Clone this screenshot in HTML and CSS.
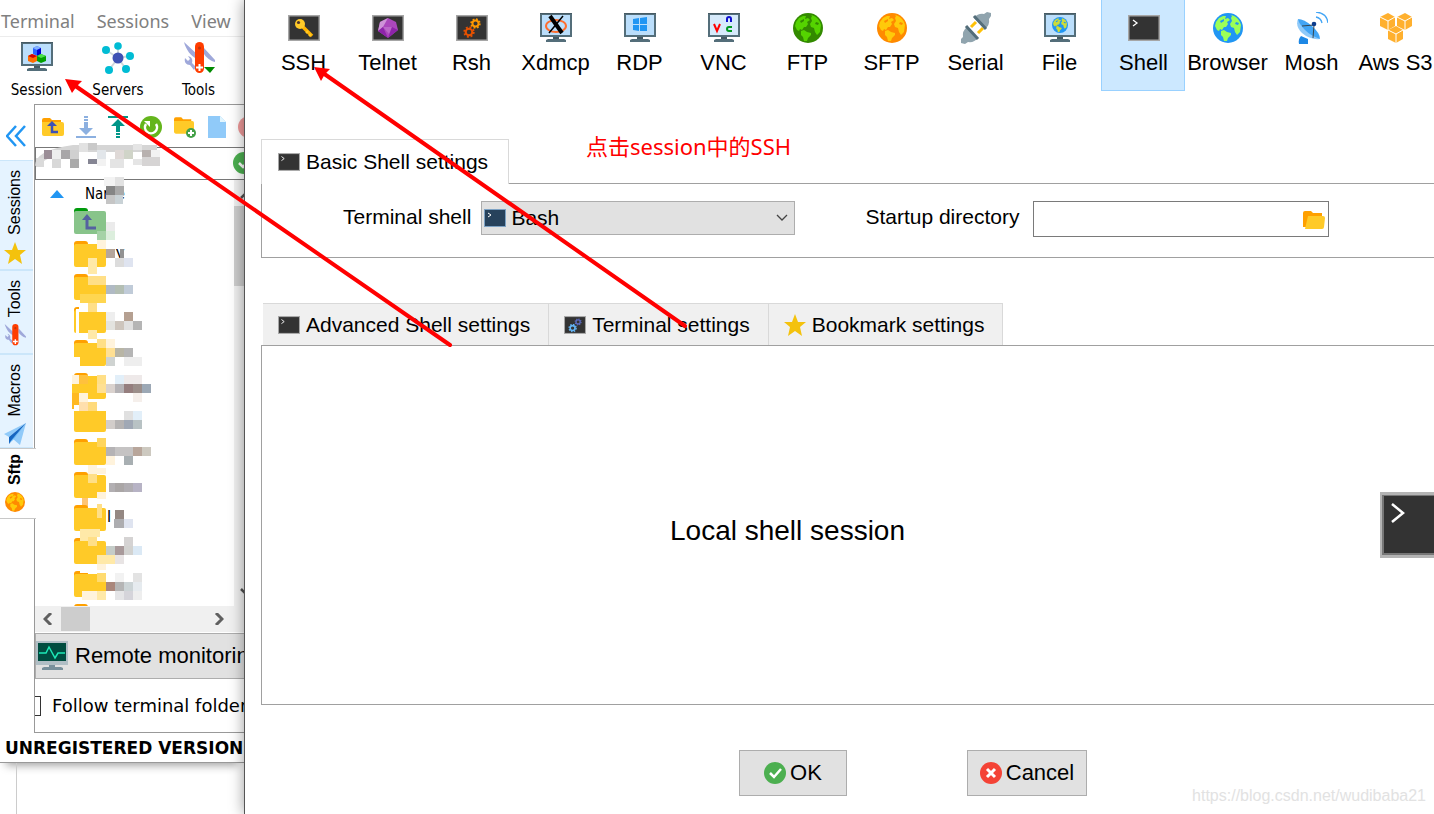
FILE: index.html
```html
<!DOCTYPE html>
<html lang="en">
<head>
  <meta charset="UTF-8">
  <title>Session settings</title>
  <link rel="stylesheet" href="styles.css">
</head>
<body>

  <!-- SHARED ICONS -->
  <svg class="sprite" aria-hidden="true">
    <symbol id="monitor" viewBox="0 0 32 30">
      <path fill="#546e7a" d="M0 0h32v24H0z"/>
      <path fill="#455a64" d="M0 0h32v1H0zM13 24h6v2h-6z"/>
      <path fill="#bbdefb" d="M2 2h28v20H2z"/>
      <path fill="#546e7a" d="M8 26h16l2 1v2H6v-2z"/>
    </symbol>
    <symbol id="box" viewBox="0 0 32 26">
      <path fill="#a6a6a6" d="M0 0h32v26H0z"/>
      <path fill="#333" d="M1.500 1.500h29v23h-29z"/>
    </symbol>
    <symbol id="terminal" viewBox="0 0 32 26">
      <use href="#box"/>
      <path fill="none" stroke="#fff" stroke-width="1.300" d="M5 5l4 3-4 3"/>
    </symbol>
    <symbol id="globe" viewBox="0 0 30 30">
      <circle class="ocean" cx="15" cy="15" r="15"/>
      <path class="land" d="M3 9L6 5l4-2 3 0-1 3 3-1 2 2-3 2 1 2-2 3-2 0-2 3-2-1-1 2-2-1-2-4zM8 18l3-1 3 2 4 1 0 2-3 3-1 3-3 0-1-4-2-2zM18 2c5 1 9 5 10 10l-1 7-3 3-2-3-1-4-3-1-1-3 2-3-1-3 1-2z"/>
      <path class="ocean" d="M7 8l4-2 0 2-3 2zM23 9l3 1-1 2-3-1z"/>
    </symbol>
    <symbol id="star" viewBox="0 0 22 22">
      <path fill="#f4c20d" d="M11 0l3 8h8l-6 5 2 9-7-5-7 5 2-9-6-5h8z"/>
    </symbol>
    <symbol id="knife" viewBox="0 0 32 32">
      <path fill="#9fa8da" d="M1 0l15 14-2 3C8 14 3 8 1 0zM21 6l11 12v2c-5-1-9-5-11-8zM2 16l3 3 2-2-2-3c4 1 5 4 4 7l4 4-2 3-4-5c-4 0-6-3-5-7z"/>
      <rect x="12" width="9" height="31" rx="4.500" fill="#ff3d00"/>
      <circle cx="16.500" cy="6" r="1.500" fill="#bf360c"/>
      <path stroke="#fff" stroke-width="2" d="M16.500 22v7M13 25.500h7"/>
    </symbol>
    <symbol id="gear" viewBox="-10 -10 20 20">
      <g fill="none" stroke="currentColor">
        <circle r="5.500" stroke-width="3.500"/>
        <circle r="8" stroke-width="3" stroke-dasharray="3.200 3.080"/>
      </g>
    </symbol>
    <symbol id="check" viewBox="0 0 22 22">
      <circle cx="11" cy="11" r="11" fill="#4caf50"/>
      <path fill="none" stroke="#fff" stroke-width="2.500" d="M6 11l4 4 7-8"/>
    </symbol>
    <symbol id="folder" viewBox="0 0 22 18">
      <path fill="#ffa000" d="M0 2q0-2 2-2h6l2 2h9v14H0z"/>
      <path fill="#ffca28" d="M0 4h20q2 0 2 2v10q0 2-2 2H2q-2 0-2-2z"/>
    </symbol>
  </svg>

  <div class="app">
    <nav class="menu">
      <a href="#">Terminal</a>
      <a href="#">Sessions</a>
      <a href="#">View</a>
    </nav>

    <div class="toolbar">
      <button class="tool">
        <svg width="32" height="32" viewBox="0 0 32 32">
          <use href="#monitor" width="32" height="30"/>
          <path fill="#2962ff" d="M12 6l4-2 4 2v6l-4 2-4-2z"/><path fill="#82b1ff" d="M12 6l4-2 4 2-4 2z"/><path fill="#0000d0" d="M16 8l4-2v6l-4 2z"/>
          <path fill="#ff6d00" d="M7 14l4-2 5 2v5l-4 2-5-2z"/><path fill="#d50000" d="M7 14l4-2 5 2-4 2z"/>
          <path fill="#00a000" d="M16 14l4-2 5 2v5l-5 2-4-2z"/><path fill="#4be04b" d="M16 14l4-2 5 2-5 2z"/>
        </svg>
        <span>Session</span>
      </button>
      <button class="tool">
        <svg width="32" height="32" viewBox="0 0 32 32">
          <path stroke="#cfd8dc" stroke-width="2" d="M16 16V4M16 16L4 8M16 16l11-2M16 16l8 11M16 16L7 28"/>
          <circle cx="16" cy="16" r="5.500" fill="#3f51b5"/>
          <g fill="#00bcd4"><circle cx="16" cy="4" r="3.800"/><circle cx="4" cy="8" r="4"/><circle cx="28" cy="14" r="4"/><circle cx="24" cy="27" r="4"/><circle cx="7" cy="28" r="4"/></g>
        </svg>
        <span>Servers</span>
      </button>
      <button class="tool">
        <svg width="32" height="32" viewBox="0 0 32 32">
          <use href="#knife" width="32" height="32"/>
          <path fill="#008a00" d="M21 25h11l-5 6z"/>
        </svg>
        <span>Tools</span>
      </button>
    </div>

    <div class="workspace">
      <div class="rail">
        <button class="collapse" aria-label="Collapse">
          <svg width="20" height="22" viewBox="0 0 20 22"><path fill="none" stroke="#2196f3" stroke-width="2.500" d="M10 1L1 11l9 10M19 1l-9 10 9 10"/></svg>
        </button>
        <button class="rail-tab sessions"><span>Sessions</span><svg width="22" height="22"><use href="#star"/></svg></button>
        <button class="rail-tab tools"><span>Tools</span><svg width="22" height="22"><use href="#knife"/></svg></button>
        <button class="rail-tab macros"><span>Macros</span>
          <svg width="22" height="22" viewBox="0 0 22 22"><path fill="#90caf9" d="M22 0L0 11l5 3zM22 0L9 16l7 6z"/><path fill="#1565c0" d="M22 0L5 14v7l4-5z"/><path fill="#64b5f6" d="M22 0L5 20l4-3z"/></svg>
        </button>
        <button class="rail-tab active"><span>Sftp</span><svg class="globe-orange" width="20" height="20"><use href="#globe"/></svg></button>
      </div>

      <div class="browser">
        <div class="actions">
          <button aria-label="Parent folder">
            <svg width="22" height="18" viewBox="0 0 22 18"><use href="#folder"/><path fill="none" stroke="#3f51b5" stroke-width="2.500" d="M10 5v9h6"/><path fill="#3f51b5" d="M5 8l5-5 5 5z"/></svg>
          </button>
          <button aria-label="Download">
            <svg width="20" height="22" viewBox="0 0 20 22"><path fill="#8cb0e0" d="M8 0h4v2H8zM8 3h4v2H8zM8 6h4v6h5l-7 7-7-7h5zM0 20h20v2H0z"/></svg>
          </button>
          <button aria-label="Upload">
            <svg width="20" height="22" viewBox="0 0 20 22"><path fill="#009688" d="M0 0h20v2H0zM10 3l7 7h-5v6H8v-6H3zM8 17h4v2H8zM8 20h4v2H8z"/></svg>
          </button>
          <button aria-label="Refresh">
            <svg width="22" height="22" viewBox="0 0 22 22"><circle cx="11" cy="11" r="11" fill="#64b51c"/><path fill="none" stroke="#fff" stroke-width="2.500" d="M6 8a6 6 0 1 0 10 0"/><path fill="#fff" d="M4 5h6v6z"/></svg>
          </button>
          <button aria-label="New folder">
            <svg width="22" height="22" viewBox="0 0 22 22"><use href="#folder" y="1" width="20" height="17"/><circle cx="17" cy="17" r="5" fill="#43a047"/><path stroke="#fff" stroke-width="2" d="M17 14v6M14 17h6"/></svg>
          </button>
          <button aria-label="New file">
            <svg width="18" height="22" viewBox="0 0 18 22"><path fill="#90caf9" d="M0 0h12l6 6v16H0z"/><path fill="#e1f5fe" d="M12 0v6h6z"/></svg>
          </button>
          <button aria-label="Delete">
            <svg width="22" height="22" viewBox="0 0 22 22"><circle cx="11" cy="11" r="11" fill="#ef9a9a"/></svg>
          </button>
        </div>

        <div class="path">
          <input type="text" aria-label="Remote path">
          <svg class="path-mosaic" id="pathMosaic" width="126" height="26" viewBox="35 143 126 26"></svg>
          <svg class="path-check" width="22" height="22"><use href="#check"/></svg>
        </div>

        <div class="files">
          <div class="files-main">
            <div class="files-head">
              <svg width="14" height="8" viewBox="0 0 14 8"><path fill="#2196f3" d="M7 0l7 8H0z"/></svg>
              <span>Name</span>
              <svg class="head-mosaic" id="headMosaic" width="24" height="28" viewBox="103 177 24 28"></svg>
            </div>
            <ul class="file-list" id="fileList"></ul>
          </div>
          <div class="vscroll">
            <svg width="11" height="26" viewBox="0 0 11 26"><path fill="none" stroke="#505050" stroke-width="2.500" d="M7 18l6-6 6 6"/></svg>
            <div class="thumb"></div>
            <svg class="down" width="11" height="20" viewBox="0 0 11 20"><path fill="none" stroke="#505050" stroke-width="2.500" d="M7 3l6 6 6-6"/></svg>
          </div>
        </div>

        <div class="hscroll">
          <svg width="10" height="12" viewBox="0 0 10 12"><path fill="none" stroke="#606060" stroke-width="3" d="M8 0L2 6l6 6"/></svg>
          <div class="thumb"></div>
          <svg class="right" width="10" height="12" viewBox="0 0 10 12"><path fill="none" stroke="#606060" stroke-width="3" d="M2 0l6 6-6 6"/></svg>
        </div>

        <button class="monitoring">
          <svg width="32" height="30" viewBox="0 0 32 30">
            <path fill="#b0bec5" d="M0 0h32v24H0z"/><path fill="#004d40" d="M2 2h28v18H2z"/>
            <path fill="none" stroke="#1de9b6" stroke-width="1.500" d="M3 12h7l3-6 6 11 3-5h7"/>
            <path fill="#78909c" d="M13 24h6v2h6l2 1v2H6v-2l2-1h5z"/>
          </svg>
          <span>Remote monitoring</span>
        </button>

        <label class="follow"><input type="checkbox"><span>Follow terminal folder</span></label>
      </div>
    </div>

    <div class="status">UNREGISTERED VERSION</div>
    <div class="below"></div>
  </div>

  <div class="dialog">
    <div class="types">
      <button class="type"><svg width="32" height="30" viewBox="0 -2 32 30"><use href="#box" width="32" height="26"/><path stroke="#ffb300" stroke-width="3.500" d="M14 11l10 10"/><path stroke="#ffca28" stroke-width="2" d="M18 18l2-2M21 21l2-2"/><circle cx="12" cy="9" r="5" fill="#ffca28"/><circle cx="10.500" cy="7.500" r="1.600" fill="#4e342e"/></svg><span>SSH</span></button>
      <button class="type"><svg width="32" height="30" viewBox="0 -2 32 30"><use href="#box" width="32" height="26"/><path fill="#ab47bc" d="M16 3l8 4 2 8-10 8-10-7 2-9z"/><path fill="#ce93d8" d="M16 3L8 7l3 5zM8 7l3 5-5 4z"/><path fill="#ba68c8" d="M11 12h9l-3 7z"/><path fill="#8e24aa" d="M16 23l4-11 6 3zM11 12l5 11-10-7z"/></svg><span>Telnet</span></button>
      <button class="type"><svg width="32" height="30" viewBox="0 -2 32 30"><use href="#box" width="32" height="26"/><use class="gear-dark" href="#gear" x="7" y="11" width="12" height="12"/><use class="gear-light" href="#gear" x="14" y="3" width="11" height="11"/></svg><span>Rsh</span></button>
      <button class="type"><svg width="32" height="30" viewBox="0 0 32 30"><use href="#monitor"/><ellipse cx="16" cy="13" rx="10" ry="6" fill="none" stroke="#ff6d2d" stroke-width="2"/><path stroke="#000" stroke-width="4" d="M10 3l12 17"/><path stroke="#000" stroke-width="1.500" d="M23 3L9 20"/></svg><span>Xdmcp</span></button>
      <button class="type"><svg width="32" height="30" viewBox="0 0 32 30"><use href="#monitor"/><path fill="#2196f3" d="M9 6l6-1v6H9zM16 5l7-1v7h-7zM9 12h6v6l-6-1zM16 12h7v6h-7z"/></svg><span>RDP</span></button>
      <button class="type"><svg width="32" height="30" viewBox="0 0 32 30"><use href="#monitor"/><path fill="#d6eafb" d="M2 2h28v20H2z"/><path fill="none" stroke="#f00" stroke-width="2" d="M6 11l3 7 3-7"/><path fill="none" stroke="#1010d0" stroke-width="2" d="M19 9V6q0-2 2-2t2 2v3"/><path fill="none" stroke="#009820" stroke-width="2" d="M24 14h-3q-2 0-2 2t2 2h3"/></svg><span>VNC</span></button>
      <button class="type"><svg class="globe-green" width="30" height="30"><use href="#globe"/></svg><span>FTP</span></button>
      <button class="type"><svg class="globe-orange" width="30" height="30"><use href="#globe"/></svg><span>SFTP</span></button>
      <button class="type"><svg width="32" height="32" viewBox="0 0 32 32"><path fill="#90a4ae" d="M1 31v-4l2-2q-1-6 4-10l11 11q-4 5-10 4l-3 2zM31 1v3l-2 3q1 6-4 10L14 6q4-5 10-4l3-2z"/><path stroke="#ffc107" stroke-width="3" d="M11 15l5-5M18 21l5-5"/><path stroke="#546e7a" stroke-width="3" d="M6 14l12 13M14 4l12 13"/></svg><span>Serial</span></button>
      <button class="type"><svg class="globe-file" width="32" height="30" viewBox="0 0 32 30"><use href="#monitor"/><use href="#globe" x="8" y="4" width="16" height="16"/></svg><span>File</span></button>
      <button class="type selected"><svg width="32" height="30" viewBox="0 -2 32 30"><use href="#terminal" width="32" height="26"/></svg><span>Shell</span></button>
      <button class="type"><svg class="globe-blue" width="30" height="30"><use href="#globe"/></svg><span>Browser</span></button>
      <button class="type"><svg width="32" height="32" viewBox="0 0 32 32"><path fill="#1e88e5" d="M5 24l7 3v5H3q-1-5 2-8z"/><path fill="#90caf9" d="M2 7q-3 7 4 14 8 7 18 6z"/><path fill="#42a5f5" d="M2 7q6 0 14 7t8 13Q15 24 9 18T2 7z"/><path fill="none" stroke="#37474f" d="M6 14l12-1-1 13"/><circle cx="18" cy="12" r="2.300" fill="#0d3c8c"/><path fill="none" stroke="#42a5f5" stroke-width="1.300" d="M20 5q5 1 6 6M20 0q11 1 12 11"/></svg><span>Mosh</span></button>
      <button class="type"><svg width="34" height="30" viewBox="0 0 34 30"><g id="cube"><path fill="#ffb02e" d="M1 4l8-4 7 4v9l-7 4-8-4z"/><path fill="none" stroke="#fff" d="M1 4l8 4 7-4M9 8v9"/></g><use href="#cube" x="17"/><use href="#cube" x="8" y="13"/></svg><span>Aws S3</span></button>
    </div>

    <section class="basic">
      <div class="tabs">
        <button class="tab current"><svg width="22" height="18"><use href="#terminal"/></svg>Basic Shell settings</button>
      </div>
      <div class="basic-body">
        <label for="shell">Terminal shell</label>
        <div class="field-select">
          <select id="shell"><option>Bash</option></select>
          <svg class="shell-icon" width="22" height="18" viewBox="0 0 22 18"><path fill="#7da2c4" d="M0 0h22v18H0z"/><path fill="#27425c" d="M1 1h20v16H1z"/><path fill="none" stroke="#fff" d="M4 4l3 2-3 2"/></svg>
          <svg class="chevron" width="12" height="8" viewBox="0 0 12 8"><path fill="none" stroke="#444" stroke-width="1.300" d="M1 1l5 5 5-5"/></svg>
        </div>
        <label class="startup" for="dir">Startup directory</label>
        <div class="field-dir">
          <input type="text" id="dir">
          <button aria-label="Browse">
            <svg width="22" height="18" viewBox="0 0 22 18"><path fill="#ffa000" d="M0 2q0-2 2-2h6l2 2h9v14H0z"/><path fill="#ffca28" d="M5 5h15q2 0 2 2l-1 9q0 2-2 2H2z"/></svg>
          </button>
        </div>
      </div>
    </section>

    <section class="advanced">
      <div class="tabs">
        <button class="tab"><svg width="22" height="18"><use href="#terminal"/></svg>Advanced Shell settings</button>
        <button class="tab"><svg width="22" height="18" viewBox="0 0 32 26"><use href="#box"/><use class="gear-sky" href="#gear" x="6" y="11" width="13" height="13"/><use class="gear-indigo" href="#gear" x="15" y="3" width="11" height="11"/></svg>Terminal settings</button>
        <button class="tab"><svg width="22" height="22"><use href="#star"/></svg>Bookmark settings</button>
      </div>
      <div class="advanced-body">
        <p>Local shell session</p>
        <svg width="54" height="66" viewBox="0 0 54 66"><path fill="#b4b4b4" d="M0 0h80v66H0z"/><path fill="#777" d="M2 3h80v60H2z"/><path fill="#333" d="M4 4h80v57H4z"/><path fill="none" stroke="#fff" stroke-width="2.500" d="M12 12l11 9-11 9"/></svg>
      </div>
    </section>

    <div class="buttons">
      <button class="ok"><svg width="22" height="22"><use href="#check"/></svg>OK</button>
      <button class="cancel"><svg width="22" height="22" viewBox="0 0 22 22"><circle cx="11" cy="11" r="11" fill="#f44336"/><path stroke="#fff" stroke-width="3" d="M7 7l8 8M15 7l-8 8"/></svg>Cancel</button>
    </div>
  </div>

  <!-- ANNOTATIONS -->
  <svg class="arrows" width="700" height="360" viewBox="0 0 700 360">
    <g stroke="#f00" stroke-width="4" stroke-linecap="round"><path d="M74 85l376 260"/><path d="M323 73l362 253"/></g>
    <path fill="#f00" d="M65 79l17 2-5 5-5 7zM314 67l16 2-5 5-4 7z"/>
  </svg>
  <p class="note">点击session中的SSH</p>
  <p class="watermark">https://blog.csdn.net/wudibaba21</p>

  <script>
    const Y = '#ffca28', O = '#ffa000', P = '#ffdf87', L = '#fff3dc';

    // one entry per row: cells are [x, y, width, height, colour]
    const rows = [
      { tab: '#009a0c', body: '#88c48a', up: true, cells: [[97,231,9,9,'#a5d2a7'],[106,231,9,9,'#dceedd'],[106,222,9,9,'#ebebeb']] },
      { text: 'y', x: 116, cells: [[97,240,9,9,L],[106,249,9,9,'#b5a69b'],[120,249,4,9,'#929292'],[115,258,9,9,'#dcdcdc'],[124,258,9,9,'#dfe4f0'],[88,258,9,9,'#ffe9a8'],[88,267,9,7,'#ffe9a8']] },
      { cells: [[88,276,18,9,P],[80,294,26,9,'#ffd650'],[106,285,9,9,'#b0bac4'],[115,285,9,9,'#b3beb3'],[124,285,9,9,'#c0cbd8']] },
      { cells: [[76,309,3,24,'#fff'],[79,307,27,5,'#fff'],[88,303,9,9,P],[88,330,9,9,'#ffe9a8'],[106,312,9,9,'#eee'],[124,312,9,9,'#b5a091'],[106,321,9,9,'#e3e3df'],[115,321,9,9,'#cdc5bd'],[124,321,9,9,'#e0e0e0'],[133,321,9,9,'#b5b5b5']] },
      { cells: [[74,357,6,9,'#fff'],[97,339,9,9,P],[106,339,9,9,L],[106,348,9,9,'#ffe093'],[115,348,9,9,'#b8b5a5'],[124,348,9,9,'#b5b5b5'],[106,357,9,9,'#cfd3d1'],[124,357,18,9,'#eee']] },
      { cells: [[72,375,7,9,L],[79,375,9,9,'#ffc13d'],[72,384,25,9,Y],[72,393,7,16,'#ffb922'],[79,393,9,9,L],[97,375,9,9,P],[97,384,9,9,'#ffe093'],[106,384,9,9,'#dad2ce'],[115,384,9,9,'#b5b2b5'],[124,384,9,9,'#957e7e'],[133,384,9,9,'#9b8e8a'],[142,384,9,9,'#9ca8b5'],[124,375,18,9,'#eee9e9'],[115,375,9,9,'#e2eff9'],[133,393,9,9,'#f5efeb']] },
      { cells: [[74,405,32,6,'#fff'],[79,402,9,9,'#ffdfad'],[88,402,9,9,'#ffda7b'],[106,420,9,9,'#d2cdca'],[115,420,9,9,'#b5b3b3'],[124,420,9,9,'#a0a8b5'],[133,420,9,9,'#b8c2c4'],[124,411,9,9,'#e0e0e0'],[133,411,9,9,'#e2eff9']] },
      { cells: [[97,438,9,9,'#ffd55c'],[106,447,9,9,'#b5b3b5'],[115,447,18,9,'#c5c3c3'],[133,447,9,9,'#b8a69b'],[142,447,9,9,'#cdc9c0'],[124,456,9,9,'#a8afb2'],[106,456,9,9,L],[88,465,9,6,L]] },
      { cells: [[88,474,9,9,P],[97,492,9,7,L],[109,483,6,9,'#b2afb2'],[115,483,9,9,'#aaa6a6'],[124,483,9,9,'#b0adb2'],[133,483,9,9,'#b7b3c5'],[88,468,18,6,L],[82,498,6,9,'#ffc574']] },
      { text: 'l', x: 107, cells: [[97,504,5,14,P],[115,510,9,9,'#948883'],[114,519,10,9,'#adadb0'],[124,519,9,9,'#dfe4f0'],[80,529,20,8,'#ffe9a8']] },
      { cells: [[80,537,8,4,'#ffe9a8'],[88,537,9,9,P],[124,537,9,9,'#d5d3d3'],[106,546,9,9,'#c5ccc8'],[115,546,9,9,'#a8999a'],[124,546,9,9,'#d2d2d0'],[133,546,9,9,'#dbe9f5'],[97,555,18,9,'#ffe9a8'],[115,555,9,9,'#e8e4e4'],[97,564,9,9,L]] },
      { cells: [[80,570,26,3,'#fff'],[97,573,9,9,'#ffdb70'],[82,591,16,9,L],[97,591,9,9,'#ffe9a8'],[106,582,9,9,'#aa877c'],[115,582,9,9,'#b5b5b5'],[124,582,9,9,'#ccd4d6'],[133,582,9,9,'#e6ebef'],[115,573,9,9,'#f2f2f2'],[133,573,9,9,'#e3e3e3'],[115,591,9,9,'#e5e5e7'],[124,591,9,9,'#d5d4da'],[133,591,9,9,'#eee']] },
      { cells: [] }
    ];

    const pathCells = [[44,150,8,9,'#9b8e97'],[52,150,9,9,'#eee'],[61,150,9,9,'#a8a6a8'],[70,150,9,9,'#d0d0d0'],[79,143,9,9,'#e2e2e2'],[88,143,9,7,'#c9c9c9'],[97,150,9,9,'#e2e6ea'],[115,150,9,9,'#dfd9d7'],[124,150,9,9,'#d0d4c8'],[133,144,9,6,'#e5e5e5'],[142,150,9,9,'#b8b1af'],[151,150,9,9,'#f2f2f2'],[36,158,8,9,'#dadada'],[52,159,9,9,'#d8d8d8'],[70,159,9,9,'#aaa'],[88,159,9,5,'#858593'],[97,159,9,7,'#f2f2f2'],[110,159,14,9,'#e4e4e4'],[133,159,9,6,'#e5e5e5'],[142,157,18,9,'#d6d4d4']];
    const headCells = [[104,177,19,9,'#f3f3f3'],[115,177,9,9,'#e2e2e2'],[106,186,9,9,'#858585'],[115,186,9,9,'#a8a8a8'],[106,195,9,9,'#c5c5c5'],[115,195,8,9,'#c9d2d6']];

    const draw = cells => cells.map(([x, y, w, h, c]) =>
      `<rect x="${x}" y="${y}" width="${w}" height="${h}" fill="${c}"/>`).join('');

    document.getElementById('fileList').innerHTML = rows.map((row, i) => {
      const y = 207 + i * 33;
      const arrow = row.up ? `<path fill="none" stroke="#5560a0" stroke-width="3" d="M87 ${y + 11}v10h9"/><path fill="#5560a0" d="M82 ${y + 13}l5-6 5 6z"/>` : '';
      return `<li>
        <svg width="199" height="33" viewBox="35 ${y} 199 33">
          <rect x="74" y="${y + 1}" width="14" height="12" rx="3" fill="${row.tab || O}"/>
          <rect x="74" y="${y + 4}" width="32" height="23" rx="2" fill="${row.body || Y}"/>
          ${arrow}
          ${row.text ? `<text x="${row.x}" y="${y + 18}">${row.text}</text>` : ''}
          ${draw(row.cells)}
        </svg>
      </li>`;
    }).join('');

    document.getElementById('pathMosaic').innerHTML =
      '<path fill="#d5d5d5" d="M35 166q0-16 38-21h84v7H60z"/>' + draw(pathCells);
    document.getElementById('headMosaic').innerHTML = draw(headCells);
  </script>

</body>
</html>
```
FILE: styles.css
```css
* {
  box-sizing: border-box;
}

body {
  margin: 0;
  min-height: 100vh;
  display: flex;
  position: relative;
  overflow: hidden;
  background: #fff;
  color: #000;
  font-family: "Liberation Sans", Arial, sans-serif;
  font-size: 21px;
}

button {
  margin: 0;
  padding: 0;
  border: none;
  background: none;
  color: inherit;
  font: inherit;
  cursor: pointer;
}

p {
  margin: 0;
}

svg {
  display: block;
  flex: none;
}

.sprite {
  position: absolute;
  width: 0;
  height: 0;
}

/* Icon colours */
.ocean { fill: var(--ocean); }
.land { fill: var(--land); }
.globe-green { --ocean: #338a00; --land: #55d400; }
.globe-orange { --ocean: #ff8a00; --land: #ffca0a; }
.globe-blue { --ocean: #2196f3; --land: #9cff57; }
.globe-file { --ocean: #2196f3; --land: #cddc39; }
.gear-dark { color: #e65100; }
.gear-light { color: #ff9800; }
.gear-sky { color: #64b5f6; }
.gear-indigo { color: #5c6bc0; }

/* Main window */
.app {
  flex: none;
  width: 244px;
  display: flex;
  flex-direction: column;
  overflow: hidden;
}

.menu {
  display: flex;
  gap: 22px;
  height: 37px;
  padding: 8px 0 0 1px;
  border-bottom: 1px solid #ececec;
  font-family: "Noto Sans", sans-serif;
  font-size: 18px;
  line-height: 26px;
}

.menu a {
  color: #808080;
  text-decoration: none;
}

.toolbar {
  display: flex;
  height: 67px;
  padding-top: 5px;
}

.tool {
  display: flex;
  flex-direction: column;
  align-items: center;
  gap: 6px;
  width: 81px;
  flex: none;
  font-family: "DejaVu Sans Condensed", "Noto Sans", sans-serif;
  font-size: 15px;
  line-height: 20px;
}

.tool:first-child {
  width: 73px;
}

.tool:nth-child(2) {
  width: 90px;
}

.tool:nth-child(3) {
  width: 71px;
}

.workspace {
  display: flex;
}

.rail {
  width: 34px;
  flex: none;
  z-index: 1;
}

.collapse {
  display: flex;
  justify-content: center;
  width: 32px;
  padding: 21px 0 13px;
}

.rail-tab {
  display: flex;
  flex-direction: column;
  align-items: center;
  width: 33px;
  padding: 9px 3px 3px 0;
  gap: 7px;
  border-top: 1px solid #cbe6fa;
  border-bottom: 1px solid #cbe6fa;
  background: #e5f3ff;
  font-size: 16px;
}

.rail-tab span {
  writing-mode: vertical-rl;
  transform: rotate(180deg);
  line-height: 20px;
}

.sessions {
  height: 110px;
}

.tools {
  height: 84px;
}

.macros {
  height: 94px;
}

.rail-tab.active {
  width: 36px;
  height: 71px;
  padding: 5px 6px 5px 0;
  border-color: #c8c8c8;
  background: #fff;
  font-weight: bold;
}

.browser {
  flex: 1;
  min-width: 0;
  border: 1px solid #999;
  border-right: none;
}

.actions {
  display: flex;
  align-items: center;
  gap: 12px;
  height: 42px;
  padding-left: 7px;
  padding-top: 2px;
}

.path {
  position: relative;
  height: 33px;
}

.path input {
  display: block;
  width: 100%;
  height: 33px;
  border: 1px solid #777;
  border-right: none;
}

.path-mosaic {
  position: absolute;
  left: 0;
  top: -4px;
}

.path-check {
  position: absolute;
  left: 198px;
  top: 5px;
}

.files {
  display: flex;
  height: 426px;
}

.files-main {
  flex: 1;
  min-width: 0;
}

.files-head {
  position: relative;
  display: flex;
  align-items: center;
  gap: 21px;
  height: 27px;
  padding-left: 15px;
  font-family: "DejaVu Sans Condensed", "Noto Sans", sans-serif;
  font-size: 15px;
}

.head-mosaic {
  position: absolute;
  left: 68px;
  top: -3px;
}

.file-list {
  height: 399px;
  margin: 0;
  padding: 0;
  list-style: none;
  overflow: hidden;
}

.file-list svg {
  overflow: visible;
}

.file-list text {
  font-family: "Noto Sans", sans-serif;
  font-size: 16px;
}

.vscroll {
  display: flex;
  flex-direction: column;
  width: 10px;
  background: #f0f0f0;
}

.vscroll .thumb {
  height: 80px;
  background: #cdcdcd;
}

.vscroll .down {
  margin-top: auto;
}

.hscroll {
  display: flex;
  align-items: center;
  height: 26px;
  padding: 0 20px 0 8px;
  gap: 8px;
  background: #f0f0f0;
}

.hscroll .thumb {
  width: 29px;
  height: 24px;
  background: #cdcdcd;
}

.hscroll .right {
  margin-left: auto;
}

.monitoring {
  display: flex;
  align-items: center;
  gap: 7px;
  width: 240px;
  height: 46px;
  margin-top: 1px;
  border: 1px solid #adadad;
  background: #e1e1e1;
  font-size: 22px;
  white-space: nowrap;
}

.follow {
  display: flex;
  align-items: center;
  gap: 11px;
  height: 53px;
  font-family: "DejaVu Sans", sans-serif;
  font-size: 18px;
  white-space: nowrap;
}

.follow input {
  appearance: none;
  flex: none;
  width: 6px;
  height: 20px;
  margin: 0;
  border: 1px solid #333;
  border-left: none;
}

.status {
  height: 30px;
  padding-left: 5px;
  border-bottom: 1px solid #999;
  box-shadow: 0 8px 10px -6px rgba(0, 0, 0, 0.4);
  font-family: "DejaVu Sans", sans-serif;
  font-size: 17px;
  font-weight: bold;
  line-height: 31px;
  white-space: nowrap;
}

.below {
  flex: 1;
  margin-left: 16px;
  border-left: 1px solid #ccc;
}

/* Session settings dialog */
.dialog {
  flex: 1;
  min-width: 0;
  padding-left: 16px;
  overflow: hidden;
  border-left: 1px solid #555;
  background: #fff;
  box-shadow: 0 0 14px rgba(0, 0, 0, 0.4);
  z-index: 2;
}

.types {
  display: flex;
  height: 91px;
}

.type {
  display: flex;
  flex-direction: column;
  align-items: center;
  justify-content: flex-start;
  flex: none;
  width: 84px;
  padding: 12px 0 0 1px;
  border: 1px solid transparent;
  border-top: none;
  font-size: 22px;
  line-height: 26px;
  white-space: nowrap;
}

.type svg {
  height: 32px;
  margin-bottom: 6px;
}

.type.selected {
  border-color: #99d1ff;
  background: #cce8ff;
}

.tabs {
  display: flex;
}

.tab {
  display: flex;
  align-items: center;
  gap: 6px;
  height: 42px;
  padding: 0 18px 0 15px;
  border: 1px solid #d9d9d9;
  border-left: none;
  border-bottom: none;
  background: #f0f0f0;
  white-space: nowrap;
}

.basic {
  margin-top: 48px;
}

.tab.current {
  height: 45px;
  margin-bottom: -1px;
  padding: 0 20px 0 16px;
  border-left: 1px solid #d9d9d9;
  background: #fff;
  z-index: 1;
}

.basic-body {
  display: flex;
  align-items: flex-start;
  height: 75px;
  padding: 17px 0 0 81px;
  border: 1px solid #a0a0a0;
  border-right: none;
  line-height: 32px;
}

.field-select {
  position: relative;
  width: 314px;
  margin-left: 10px;
}

.field-select select {
  display: block;
  appearance: none;
  width: 100%;
  height: 34px;
  padding: 0 0 0 29px;
  border: 1px solid #adadad;
  border-radius: 0;
  background: #e1e1e1;
  color: #000;
  font: inherit;
}

.shell-icon {
  position: absolute;
  left: 3px;
  top: 8px;
}

.chevron {
  position: absolute;
  right: 7px;
  top: 13px;
}

.startup {
  margin-left: 70px;
}

.field-dir {
  position: relative;
  width: 296px;
  margin-left: 14px;
}

.field-dir input {
  display: block;
  width: 100%;
  height: 36px;
  padding: 0 32px 0 6px;
  border: 1px solid #7a7a7a;
  font: inherit;
}

.field-dir button {
  position: absolute;
  right: 4px;
  top: 10px;
}

.advanced {
  margin-top: 45px;
}

.advanced .tabs {
  padding-left: 2px;
}

.advanced-body {
  display: flex;
  align-items: center;
  height: 360px;
  border: 1px solid #a0a0a0;
  border-right: none;
}

.advanced-body p {
  flex: 1;
  padding-top: 12px;
  font-size: 28px;
  text-align: center;
}

.advanced-body svg {
  margin-left: 67px;
}

.buttons {
  display: flex;
  gap: 120px;
  margin-top: 45px;
  padding-left: 478px;
}

.buttons button {
  display: flex;
  align-items: center;
  justify-content: center;
  gap: 4px;
  height: 46px;
  border: 1px solid #adadad;
  background: #e1e1e1;
  font-size: 22px;
}

.buttons .ok {
  width: 108px;
}

.buttons .cancel {
  width: 120px;
}

/* Annotations */
.arrows {
  position: absolute;
  left: 0;
  top: 0;
  z-index: 3;
  pointer-events: none;
}

.note {
  position: absolute;
  left: 586px;
  top: 130px;
  z-index: 3;
  color: #f00;
  font-family: "Noto Sans", "Noto Sans CJK SC", sans-serif;
  font-size: 22px;
  line-height: 32px;
}

.watermark {
  position: absolute;
  right: 8px;
  bottom: 6px;
  z-index: 3;
  color: #e2e2e2;
  font-size: 16px;
  line-height: 24px;
}
```
